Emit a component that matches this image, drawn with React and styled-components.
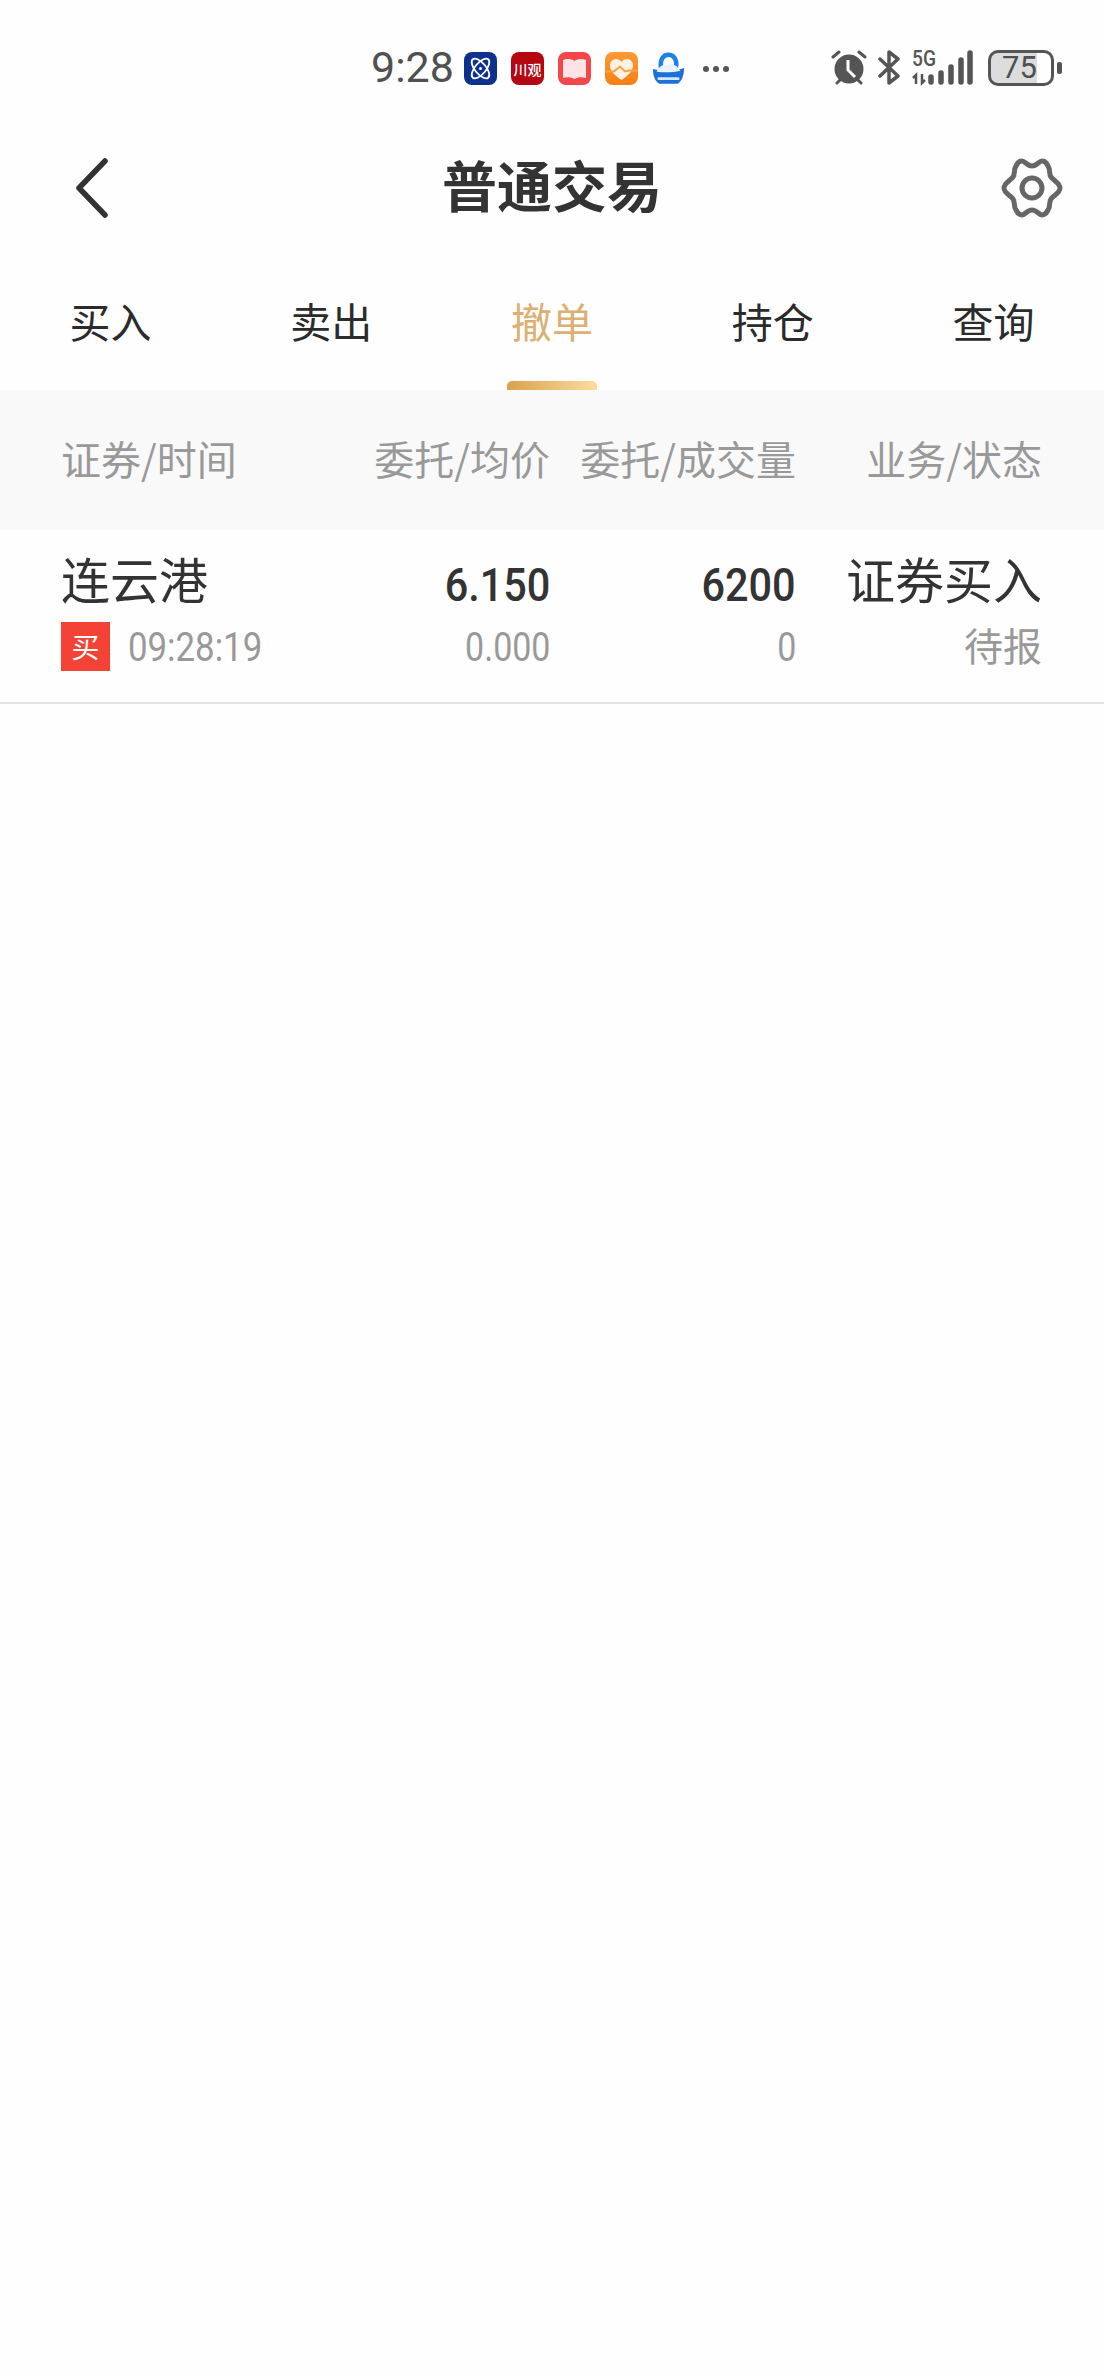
import React from "react";
import styled, { createGlobalStyle } from "styled-components";

const Global = createGlobalStyle`
  html, body { margin: 0; padding: 0; background: #fefefe; }
  * { box-sizing: border-box; }
`;
const CJK = `"Noto Sans CJK SC", "Noto Sans", sans-serif`;
const NUM = `Roboto, "Liberation Sans", sans-serif`;

const Page = styled.div`
  width: 1104px;
  height: 2376px;
  background: #fefefe;
  font-family: ${CJK};
  overflow: hidden;
`;
const StatusBar = styled.div`
  height: 120px;
  padding: 50px 0 0 371px;
  display: flex;
  align-items: flex-start;
`;
const Clock = styled.div`
  width: 93px;
  height: 35px;
  font: 400 43px/35px ${NUM};
  color: #505050;
`;
const AppIcons = styled.div`
  display: flex;
  gap: 14px;
  margin-top: 2px;
`;
const AppIcon = styled.div`
  width: 33px;
  height: 33px;
  border-radius: 8px;
  background: ${(p) => p.$bg};
  display: flex;
  align-items: center;
  justify-content: center;
  overflow: hidden;
`;
const AppLabel = styled.span`
  font: 500 14px/16px ${CJK};
  color: #fff;
  letter-spacing: 0;
  white-space: nowrap;
`;
const Dots = styled.div`
  display: flex;
  gap: 4px;
  margin: 16px 0 0 18px;
`;
const Dot = styled.i`
  width: 6px;
  height: 6px;
  border-radius: 50%;
  background: #555;
`;
const SysIcons = styled.div`
  display: flex;
  align-items: flex-start;
  margin-left: 102px;
`;
const Battery = styled.div`
  width: 66px;
  height: 36px;
  margin-left: 12px;
  padding-left: 11px;
  border: 3px solid #555;
  border-radius: 10px;
  background: linear-gradient(90deg, #dcdcdc 46px, transparent 46px);
  font: 400 31px/30px ${NUM};
  color: #505050;
`;
const BatteryNub = styled.div`
  width: 5px;
  height: 12px;
  margin: 12px 0 0 3px;
  border-radius: 2px;
  background: #555;
`;
const Nav = styled.div`
  height: 135px;
  display: grid;
  grid-template-columns: 1fr auto 1fr;
  align-items: center;
`;
const NavLead = styled.div`
  display: flex;
  padding-left: 73px;
`;
const NavTrail = styled.div`
  display: flex;
  justify-content: flex-end;
  padding-right: 41px;
`;
const Title = styled.h1`
  margin: 0 0 8px;
  font: 700 55px/1 ${CJK};
  color: #333;
`;
const Tabs = styled.div`
  height: 135px;
  display: grid;
  grid-template-columns: repeat(5, 1fr);
`;
const Tab = styled.div`
  position: relative;
  padding-top: 41px;
  text-align: center;
  font: 400 41px/48px ${CJK};
  color: ${(p) => (p.$active ? "#dbb072" : "#2b2b2b")};
`;
const Indicator = styled.div`
  position: absolute;
  left: 50%;
  bottom: 0;
  width: 90px;
  height: 9px;
  margin-left: -45px;
  border-radius: 5px 5px 0 0;
  background: linear-gradient(90deg, #d9a24a, #fbdc9f);
`;
const Grid = styled.div`
  display: grid;
  grid-template-columns: 243px 246px 246px 246px;
  padding: 0 62px 0 61px;
`;
const Header = styled(Grid)`
  height: 140px;
  align-items: center;
  background: #f9f9f9;
`;
const HeadCell = styled.div`
  padding-bottom: 4px;
  font: 400 40px/1 ${CJK};
  color: #999;
  text-align: ${(p) => (p.$left ? "left" : "right")};
  white-space: nowrap;
`;
const Row = styled(Grid)`
  height: 174px;
  border-bottom: 2px solid #e3e3e3;
`;
const Cell = styled.div`
  display: flex;
  flex-direction: column;
  align-items: ${(p) => (p.$left ? "flex-start" : "flex-end")};
  white-space: nowrap;
`;
const Primary = styled.div`
  height: 86px;
  padding-top: 18px;
  font: 400 49px/60px ${CJK};
  color: #333;
`;
const PrimaryNum = styled.div`
  height: 86px;
  padding-top: 27px;
  font: 500 46px/56px ${NUM};
  color: #333;
  transform: scaleX(0.9);
  transform-origin: right center;
`;
const Secondary = styled.div`
  margin-top: 5px;
  font: 400 39px/46px ${CJK};
  color: #999;
`;
const SecondaryNum = styled.div`
  margin-top: 9px;
  font: 400 40px/46px ${NUM};
  color: #999;
  transform: scaleX(0.85);
  transform-origin: right center;
`;
const TimeText = styled.div`
  padding-top: 4px;
  font: 400 40px/46px ${NUM};
  color: #999;
  transform: scaleX(0.87);
  transform-origin: left center;
`;
const Meta = styled.div`
  display: flex;
  align-items: center;
  gap: 18px;
  margin-top: 5px;
`;
const Tag = styled.div`
  width: 49px;
  height: 49px;
  background: #f44336;
  color: #fff;
  display: flex;
  align-items: center;
  justify-content: center;
  font: 400 28px/1 ${CJK};
`;

const Atom = () => (
  <svg width="27" height="27" viewBox="0 0 27 27" fill="none" stroke="#fff" strokeWidth="1.800">
    <ellipse cx="13.500" cy="13.500" rx="12" ry="5.500" transform="rotate(-50 13.500 13.500)" />
    <ellipse cx="13.500" cy="13.500" rx="12" ry="5.500" transform="rotate(50 13.500 13.500)" />
    <circle cx="13.500" cy="13.500" r="1.500" fill="#fff" stroke="none" />
  </svg>
);
const Book = () => (
  <svg width="27" height="24" viewBox="0 0 27 24">
    <path d="M2 3C6 1.500 10 1.500 13.500 4 17 1.500 21 1.500 25 3V21C21 20 17 20 13.500 22 10 20 6 20 2 21Z" fill="#fde4e4" />
  </svg>
);
const Heart = () => (
  <svg width="33" height="33" viewBox="0 0 33 33" fill="none">
    <path d="M16.500 28C9 23 5 18.500 5 13.500 5 9.500 8 7 11 7c2.300 0 4.300 1.100 5.500 3C17.700 8.100 19.700 7 22 7c3 0 6 2.500 6 6.500 0 5-4 9.500-11.500 14.500Z" fill="#fff2e2" />
    <path d="M0 19.500h9l6-5 5 5 4-1h9" stroke="#f8a445" strokeWidth="2" />
  </svg>
);
const Cloud = () => (
  <svg width="36" height="34" viewBox="0 0 36 34" fill="none">
    <path d="M10 17C8 6 13 1.500 18 1.500s10 4.500 8 14" stroke="#1f80e6" strokeWidth="5" />
    <path d="M1 17c6 2 28 2 34-1 0 9-3 15-7 17H8c-4-2-7-8-7-16Z" fill="#1f6fd8" />
    <path d="M5 20c3-6 8-9 12-7 3-3 10-1 14 6-8 2-18 2-26 1Z" fill="#e9f3fc" />
    <rect x="6" y="26" width="24" height="3" rx="1.500" fill="#d5e8fb" />
  </svg>
);
const Alarm = () => (
  <svg width="36" height="35" viewBox="0 0 36 35" style={{ display: "block" }}>
    <circle cx="18" cy="19" r="14.500" fill="#555" />
    <path d="M2 7l6-5M34 7l-6-5M6 33l3-3M30 33l-3-3" stroke="#555" strokeWidth="3" strokeLinecap="round" />
    <path d="M17 10v10l7 7" stroke="#fff" strokeWidth="3" fill="none" />
  </svg>
);
const Bluetooth = () => (
  <svg width="22" height="35" viewBox="0 0 22 35" fill="none" style={{ display: "block", marginLeft: 11 }}>
    <path d="M2 9l18 17-9 7V2l9 7L2 26" stroke="#555" strokeWidth="3.500" strokeLinejoin="round" strokeLinecap="round" />
  </svg>
);
const Signal = () => (
  <svg width="64" height="36" viewBox="0 0 64 36" style={{ display: "block", marginLeft: 12, overflow: "visible" }}>
    <text x="0" y="16" fontFamily="Roboto, sans-serif" fontWeight="500" fontSize="22" fill="#555" textLength="24" lengthAdjust="spacingAndGlyphs">5G</text>
    <path d="M4 34V25l-3 3M10 24v9l3-3" stroke="#555" strokeWidth="2.500" fill="none" />
    <g stroke="#555" strokeWidth="5.500" strokeLinecap="round">
      <path d="M21 27v5M31 23v9M41 17v15M51 10v22M60 3v29" transform="translate(-2 0)" />
    </g>
  </svg>
);
const Back = () => (
  <svg width="36" height="60" viewBox="0 0 36 60" fill="none">
    <path d="M32 3 6 30 32 57" stroke="#333" strokeWidth="5.500" strokeLinecap="round" strokeLinejoin="round" />
  </svg>
);
const Gear = () => (
  <svg width="62" height="60" viewBox="0 0 62 60" fill="none" stroke="#666" strokeWidth="5" strokeLinejoin="round">
    <path d="M21 3c3 0 5 5 10 5s7-5 10-5c4 0 5 3 7 7 1 3 0 6 2 9 2 3 9 6 9 11s-7 8-9 11c-2 3-1 6-2 9-2 4-3 7-7 7-3 0-5-5-10-5s-7 5-10 5c-4 0-5-3-7-7-1-3 0-6-2-9-2-3-9-6-9-11s7-8 9-11c2-3 1-6 2-9 2-4 3-7 7-7Z" />
    <circle cx="31" cy="30" r="10" />
  </svg>
);

const tabs = ["买入", "卖出", "撤单", "持仓", "查询"];

export default function App() {
  return (
    <Page>
      <Global />
      <StatusBar>
        <Clock>9:28</Clock>
        <AppIcons>
          <AppIcon $bg="#0f318e"><Atom /></AppIcon>
          <AppIcon $bg="#b50712"><AppLabel>川观</AppLabel></AppIcon>
          <AppIcon $bg="#f4474c"><Book /></AppIcon>
          <AppIcon $bg="linear-gradient(180deg,#fb9a35,#f67f12)"><Heart /></AppIcon>
          <AppIcon $bg="transparent"><Cloud /></AppIcon>
        </AppIcons>
        <Dots><Dot /><Dot /><Dot /></Dots>
        <SysIcons>
          <Alarm />
          <Bluetooth />
          <Signal />
          <Battery>75</Battery>
          <BatteryNub />
        </SysIcons>
      </StatusBar>
      <Nav>
        <NavLead><Back /></NavLead>
        <Title>普通交易</Title>
        <NavTrail><Gear /></NavTrail>
      </Nav>
      <Tabs>
        {tabs.map((t, i) => (
          <Tab key={t} $active={i === 2}>
            {t}
            {i === 2 && <Indicator />}
          </Tab>
        ))}
      </Tabs>
      <Header>
        <HeadCell $left>证券/时间</HeadCell>
        <HeadCell>委托/均价</HeadCell>
        <HeadCell>委托/成交量</HeadCell>
        <HeadCell>业务/状态</HeadCell>
      </Header>
      <Row>
        <Cell $left>
          <Primary>连云港</Primary>
          <Meta><Tag>买</Tag><TimeText>09:28:19</TimeText></Meta>
        </Cell>
        <Cell><PrimaryNum>6.150</PrimaryNum><SecondaryNum>0.000</SecondaryNum></Cell>
        <Cell><PrimaryNum>6200</PrimaryNum><SecondaryNum>0</SecondaryNum></Cell>
        <Cell><Primary>证券买入</Primary><Secondary>待报</Secondary></Cell>
      </Row>
    </Page>
  );
}
